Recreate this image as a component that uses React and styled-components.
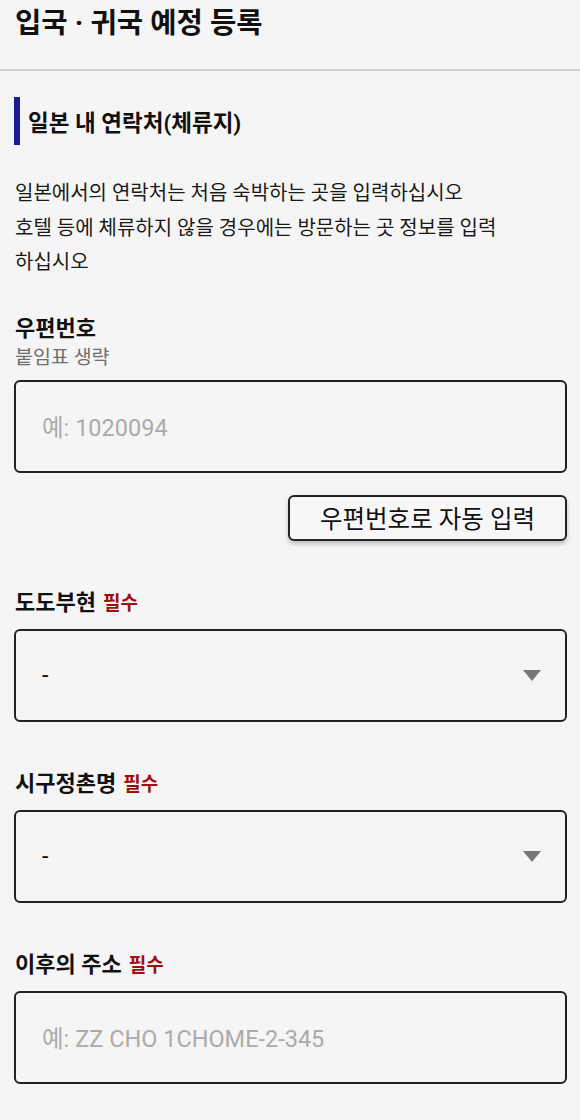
import React from "react";
import styled, { createGlobalStyle } from "styled-components";

const GlobalStyle = createGlobalStyle`
  html, body {
    margin: 0;
    padding: 0;
    background: #f5f5f5;
  }
  body {
    font-family: Roboto, "Noto Sans CJK KR", sans-serif;
    color: #1a1a1a;
  }
`;

const Page = styled.div`
  width: 580px;
  min-height: 1120px;
  background: #f5f5f5;
`;

const Header = styled.header`
  height: 71px;
  padding: 0 15px;
  border-bottom: 2px solid #d2d2d2;
  box-sizing: border-box;
`;

const Title = styled.h1`
  margin: 0;
  font-size: 28.6px;
  font-weight: 700;
  line-height: 46px;
  color: #111;
`;

const Content = styled.main`
  padding: 26px 13px 40px 14px;
`;

const SectionTitle = styled.h2`
  margin: 0;
  height: 48px;
  display: flex;
  align-items: center;
  border-left: 6px solid #1c1a96;
  padding-left: 8px;
  font-size: 22.5px;
  font-weight: 700;
  color: #111;
`;

const Lead = styled.p`
  margin: 31px 0 0 1px;
  font-size: 20px;
  line-height: 34.5px;
  color: #1a1a1a;
  white-space: nowrap;
`;

const Field = styled.div`
  margin-top: ${(p) => p.$gap}px;
  display: flex;
  flex-direction: column;
`;

const Label = styled.div`
  margin-left: 1px;
  font-size: 22px;
  font-weight: 700;
  line-height: 30px;
  color: #111;
  margin-bottom: ${(p) => (p.$hasHint ? 0 : 10)}px;
`;

const Required = styled.span`
  margin-left: 7px;
  font-size: 19px;
  font-weight: 700;
  color: #a00e0e;
`;

const Hint = styled.div`
  margin-left: 1px;
  font-size: 19.5px;
  line-height: 28px;
  color: #6f6f6f;
  margin-bottom: 8px;
`;

const Box = styled.div`
  height: 93px;
  box-sizing: border-box;
  border: 2px solid #222;
  border-radius: 6px;
  display: flex;
  align-items: center;
  justify-content: space-between;
  padding: 0 24px 0 26px;
  font-size: 23.5px;
  color: ${(p) => (p.$placeholder ? "#ababab" : "#111")};
`;

const Caret = styled.span`
  width: 0;
  height: 0;
  border-left: 9.5px solid transparent;
  border-right: 9.5px solid transparent;
  border-top: 11px solid #777;
`;

const ButtonRow = styled.div`
  display: flex;
  justify-content: flex-end;
  margin-top: 22px;
`;

const Button = styled.button`
  width: 279px;
  height: 46px;
  box-sizing: border-box;
  border: 2px solid #222;
  border-radius: 6px;
  background: #f7f7f7;
  box-shadow: 0 3px 4px rgba(0, 0, 0, 0.22);
  font-family: Roboto, "Noto Sans CJK KR", sans-serif;
  font-size: 24.5px;
  color: #111;
  padding: 0;
`;

function SelectBox() {
  return (
    <Box>
      <span>-</span>
      <Caret />
    </Box>
  );
}

export default function App() {
  return (
    <Page>
      <GlobalStyle />
      <Header>
        <Title>입국 · 귀국 예정 등록</Title>
      </Header>
      <Content>
        <SectionTitle>일본 내 연락처(체류지)</SectionTitle>
        <Lead>
          일본에서의 연락처는 처음 숙박하는 곳을 입력하십시오
          <br />
          호텔 등에 체류하지 않을 경우에는 방문하는 곳 정보를 입력
          <br />
          하십시오
        </Lead>

        <Field $gap={34}>
          <Label $hasHint>우편번호</Label>
          <Hint>붙임표 생략</Hint>
          <Box $placeholder>예: 1020094</Box>
        </Field>
        <ButtonRow>
          <Button type="button">우편번호로 자동 입력</Button>
        </ButtonRow>

        <Field $gap={47}>
          <Label>
            도도부현<Required>필수</Required>
          </Label>
          <SelectBox />
        </Field>

        <Field $gap={47}>
          <Label>
            시구정촌명<Required>필수</Required>
          </Label>
          <SelectBox />
        </Field>

        <Field $gap={47}>
          <Label>
            이후의 주소<Required>필수</Required>
          </Label>
          <Box $placeholder>예: ZZ CHO 1CHOME-2-345</Box>
        </Field>
      </Content>
    </Page>
  );
}
